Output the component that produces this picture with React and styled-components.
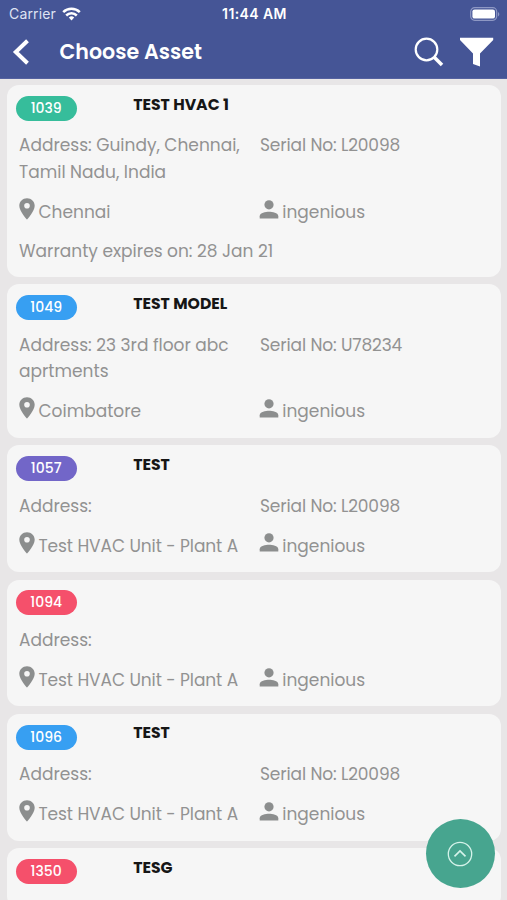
import React from "react";
import styled, { createGlobalStyle } from "styled-components";

const GlobalStyle = createGlobalStyle`
  * {
    box-sizing: border-box;
  }
  body {
    margin: 0;
    background: #e8e6e7;
    font-family: Poppins, Inter, "Liberation Sans", sans-serif;
  }
`;

const Screen = styled.div`
  position: relative;
  width: 507px;
  height: 900px;
  overflow: hidden;
  background: #e8e6e7;
`;

const Header = styled.header`
  height: 79px;
  background: #455596;
  color: #fff;
  border-bottom: 1px solid #5562a0;
`;

const StatusBar = styled.div`
  display: grid;
  grid-template-columns: 1fr auto 1fr;
  align-items: center;
  height: 27px;
  padding: 0 7px 0 9px;
  font-family: Inter, "Liberation Sans", sans-serif;
`;

const Carrier = styled.div`
  display: flex;
  align-items: center;
  gap: 6px;
  font-size: 14px;
  letter-spacing: 0.15px;
  color: #dfe3f3;
`;

const Clock = styled.div`
  font-size: 14px;
  font-weight: 600;
  letter-spacing: 0.4px;
`;

const Battery = styled.svg`
  justify-self: end;
`;

const NavBar = styled.div`
  display: flex;
  align-items: center;
  height: 50px;
  padding: 0 13px 0 12px;
`;

const NavTitle = styled.h1`
  flex: 1;
  margin: -1px 0 0 29.5px;
  font-size: 20.6px;
  font-weight: 600;
`;

const NavIcon = styled.svg`
  margin-left: ${(p) => p.$gap || 0}px;
`;

const AssetList = styled.main`
  display: flex;
  flex-direction: column;
  gap: 7.4px;
  padding: 6.2px 6px 0 7px;
`;

const Card = styled.section`
  flex: none;
  padding-bottom: ${(p) => (p.$tall ? 12.2 : 13)}px;
  background: #f6f6f6;
  border-radius: 12px;
`;

const CardHead = styled.div`
  display: flex;
  height: 47.2px;
  padding: 10.8px 9px 0 8.7px;
`;

const Badge = styled.span`
  display: flex;
  align-items: center;
  justify-content: center;
  width: 61px;
  height: 25px;
  border-radius: 13px;
  background: ${(p) => p.$color};
  color: #fff;
  font-size: 14px;
  font-weight: 500;
`;

const AssetName = styled.h2`
  margin: -1.4px 0 0 56.5px;
  font-size: 15.7px;
  line-height: 20px;
  font-weight: 700;
  color: #161616;
  white-space: nowrap;
`;

const Row = styled.div`
  display: grid;
  grid-template-columns: 241px 1fr;
  padding-left: 12px;
  margin-top: ${(p) => p.$gap || 0}px;
`;

const Text = styled.div`
  font-size: 17px;
  line-height: 26.7px;
  color: #929292;
  white-space: pre-line;
  letter-spacing: ${(p) => p.$tracking || 0}px;
`;

const Warranty = styled(Text)`
  grid-column: span 2;
`;

const IconText = styled.div`
  display: flex;
  align-items: center;
  height: 26.7px;
`;

const Glyph = styled.svg`
  flex: none;
  margin: ${(p) => p.$margin};
  fill: #8c8e8e;
`;

const ScrollTop = styled.button`
  position: absolute;
  right: 12px;
  bottom: 12px;
  width: 69px;
  height: 69px;
  padding: 0 1px 0 0;
  display: flex;
  align-items: center;
  justify-content: center;
  border: none;
  border-radius: 50%;
  background: #47a58f;
`;

const assets = [
  { id: "1039", color: "#36bd9b", name: "TEST HVAC 1", address: "Guindy, Chennai,\nTamil Nadu, India", serial: "L20098", place: "Chennai", warranty: "28 Jan 21" },
  { id: "1049", color: "#379ff2", name: "TEST MODEL", address: "23 3rd floor abc\naprtments", serial: "U78234", place: "Coimbatore" },
  { id: "1057", color: "#7266c8", name: "TEST", address: "", serial: "L20098", place: "Test HVAC Unit - Plant A" },
  { id: "1094", color: "#f5506b", name: "", address: "", serial: "", place: "Test HVAC Unit - Plant A" },
  { id: "1096", color: "#379ff2", name: "TEST", address: "", serial: "L20098", place: "Test HVAC Unit - Plant A" },
  { id: "1350", color: "#f5506b", name: "TESG" },
];

const PinIcon = () => (
  <Glyph $margin="-6.6px 3.5px 0 0" width="16" height="22" viewBox="0 0 16 22">
    <path fillRule="evenodd" d="M8 0.3C3.7 0.3 0.3 3.6 0.3 7.8 0.3 13.4 8 21.6 8 21.6S15.7 13.4 15.7 7.8C15.7 3.6 12.3 0.3 8 0.3ZM8 10.6a2.8 2.8 0 1 1 0-5.6 2.8 2.8 0 0 1 0 5.6Z" />
  </Glyph>
);

const PersonIcon = () => (
  <Glyph $margin="-6px 3px 0 -0.7px" width="20" height="19" viewBox="0 0 20 19">
    <circle cx="10" cy="4.8" r="4.6" />
    <path d="M0.7 18.5V16.2C0.7 13 6.8 11.8 10 11.8S19.3 13 19.3 16.2V18.5Z" />
  </Glyph>
);

const AssetDetails = ({ asset }) => (
  <>
    <Row>
      <Text>Address: {asset.address}</Text>
      {asset.serial && <Text $tracking={-0.12}>Serial No: {asset.serial}</Text>}
    </Row>
    <Row $gap={13.3}>
      <IconText>
        <PinIcon />
        <Text $tracking={asset.place.length > 12 ? -0.08 : 0}>{asset.place}</Text>
      </IconText>
      <IconText>
        <PersonIcon />
        <Text>ingenious</Text>
      </IconText>
    </Row>
    {asset.warranty && (
      <Row $gap={12.3}>
        <Warranty>Warranty expires on: {asset.warranty}</Warranty>
      </Row>
    )}
  </>
);

const AssetCard = ({ asset }) => (
  <Card $tall={!!asset.warranty}>
    <CardHead>
      <Badge $color={asset.color}>{asset.id}</Badge>
      <AssetName>{asset.name}</AssetName>
    </CardHead>
    {asset.place && <AssetDetails asset={asset} />}
  </Card>
);

const App = () => (
  <>
    <GlobalStyle />
    <Screen>
      <Header>
        <StatusBar>
          <Carrier>
            Carrier
            <svg width="19" height="14" viewBox="0 0 19 14" fill="none" stroke="#fff" strokeWidth="2.5">
              <path d="M1.2 5.2a11.8 11.8 0 0 1 16.6 0" />
              <path d="M4.2 8.5a7.5 7.5 0 0 1 10.6 0" />
              <path d="M6.8 10.6a3.8 3.8 0 0 1 5.4 0L9.5 13.5Z" fill="#fff" stroke="none" />
            </svg>
          </Carrier>
          <Clock>11:44 AM</Clock>
          <Battery width="30" height="14" viewBox="0 0 30 14">
            <rect x="0.7" y="0.7" width="26" height="12.6" rx="4" fill="none" stroke="#8e98c4" strokeWidth="1.2" />
            <rect x="2.4" y="2.4" width="22.6" height="9.2" rx="2.2" fill="#fff" />
            <path d="M28 5v4.4c1.8-.7 1.8-3.7 0-4.4Z" fill="#8e98c4" />
          </Battery>
        </StatusBar>
        <NavBar>
          <NavIcon width="18" height="26" viewBox="0 0 18 26" fill="none" stroke="#fff" strokeWidth="4">
            <path d="M15.5 1.8 3.8 13 15.5 24.2" />
          </NavIcon>
          <NavTitle>Choose Asset</NavTitle>
          <NavIcon width="30" height="30" viewBox="0 0 30 30" fill="none" stroke="#fff">
            <circle cx="12.5" cy="12.5" r="10.8" strokeWidth="2.2" />
            <path d="M20 20 28 28" strokeWidth="3.6" />
          </NavIcon>
          <NavIcon $gap={15} width="35" height="30" viewBox="0 0 35 30" fill="#fff">
            <path d="M1 0.8H34.2V3L21 16.5V29.5L14 27V16.5L1 3Z" />
          </NavIcon>
        </NavBar>
      </Header>
      <AssetList>
        {assets.map((asset) => (
          <AssetCard key={asset.id} asset={asset} />
        ))}
      </AssetList>
      <ScrollTop aria-label="Scroll to top">
        <svg width="26" height="26" viewBox="0 0 26 26" fill="none" stroke="#d5f3ea" strokeWidth="1.3">
          <circle cx="13" cy="13" r="11.7" />
          <path d="M7.5 15.4 13 9.9 18.5 15.4" strokeWidth="1.6" />
        </svg>
      </ScrollTop>
    </Screen>
  </>
);

export default App;
